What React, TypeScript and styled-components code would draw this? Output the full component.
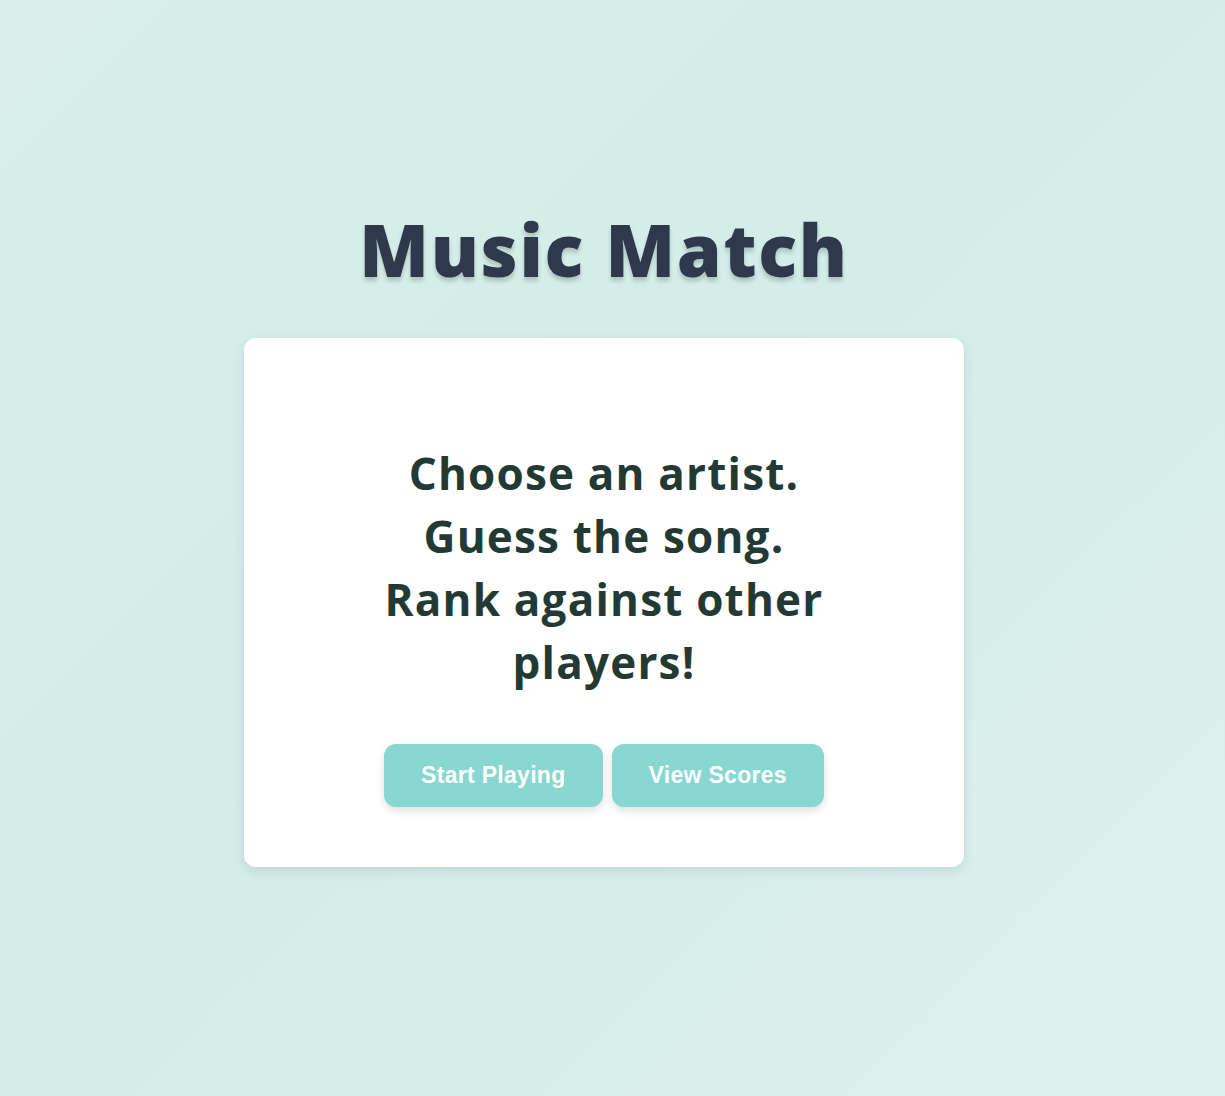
import React from "react";
import styled, { createGlobalStyle } from "styled-components";

const GlobalStyle = createGlobalStyle`
  * { box-sizing: border-box; }
  html, body { margin: 0; padding: 0; }
  body {
    min-height: 100vh;
    background: linear-gradient(135deg, #d8efeb 0%, #d3ede8 45%, #dcf1ee 100%);
    font-family: "Open Sans", "Liberation Sans", sans-serif;
  }
`;

const Page = styled.main`
  min-height: 100vh;
  display: flex;
  flex-direction: column;
  align-items: center;
  justify-content: center;
  padding: 0 17px 23px 0;
`;

const Title = styled.h1`
  margin: 0 0 46px;
  font-family: "Open Sans", "Liberation Sans", sans-serif;
  font-weight: 800;
  font-size: 72px;
  line-height: 1.2;
  letter-spacing: 1.7px;
  color: #2e3a4b;
  text-shadow: 0 4px 4px rgba(0, 0, 0, 0.18);
`;

const Card = styled.section`
  width: 720px;
  background: #ffffff;
  border-radius: 12px;
  box-shadow: 0 4px 12px rgba(0, 0, 0, 0.1);
  padding: 104px 60px 60px;
  display: flex;
  flex-direction: column;
  align-items: center;
`;

const Tagline = styled.p`
  margin: 0 0 50px;
  max-width: 500px;
  text-align: center;
  font-family: "Open Sans", "Liberation Sans", sans-serif;
  font-weight: 700;
  font-size: 44px;
  line-height: 63px;
  letter-spacing: 1.2px;
  color: #233a34;
`;

const Actions = styled.div`
  display: flex;
  gap: 9px;
`;

const ActionButton = styled.button`
  border: none;
  border-radius: 12px;
  background: #88d7d1;
  color: #ffffff;
  font-family: "Liberation Sans", Arial, sans-serif;
  font-weight: 700;
  font-size: 23px;
  line-height: 25px;
  letter-spacing: 0.3px;
  padding: 19px 37px;
  box-shadow: 0 4px 8px rgba(0, 0, 0, 0.12);
  cursor: pointer;
`;

export default function App() {
  return (
    <>
      <GlobalStyle />
      <Page>
        <Title>Music Match</Title>
        <Card>
          <Tagline>
            Choose an artist.
            <br />
            Guess the song.
            <br />
            Rank against other players!
          </Tagline>
          <Actions>
            <ActionButton>Start Playing</ActionButton>
            <ActionButton>View Scores</ActionButton>
          </Actions>
        </Card>
      </Page>
    </>
  );
}
